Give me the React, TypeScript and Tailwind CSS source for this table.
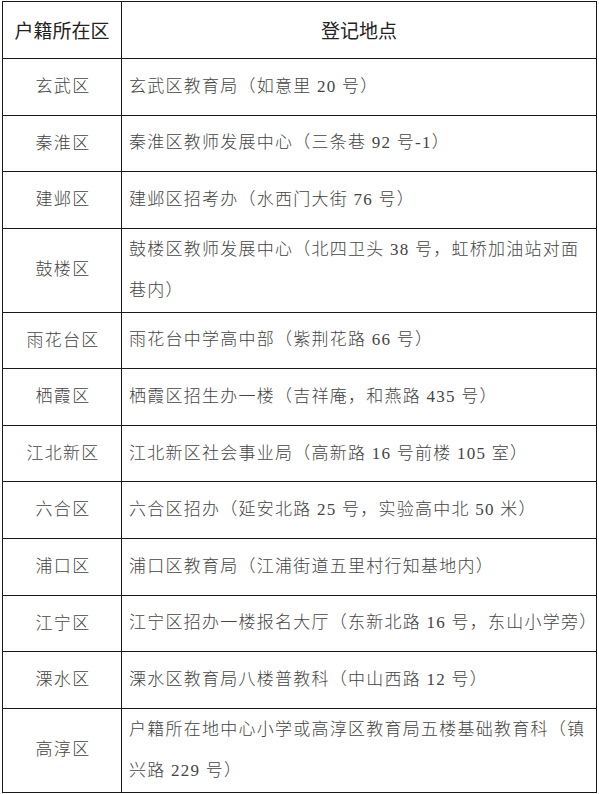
const rows: { area: string; place: string[]; tall?: boolean }[] = [
  { area: '玄武区', place: ['玄武区教育局（如意里 20 号）'] },
  { area: '秦淮区', place: ['秦淮区教师发展中心（三条巷 92 号-1）'] },
  { area: '建邺区', place: ['建邺区招考办（水西门大街 76 号）'] },
  { area: '鼓楼区', place: ['鼓楼区教师发展中心（北四卫头 38 号，虹桥加油站对面', '巷内）'], tall: true },
  { area: '雨花台区', place: ['雨花台中学高中部（紫荆花路 66 号）'] },
  { area: '栖霞区', place: ['栖霞区招生办一楼（吉祥庵，和燕路 435 号）'] },
  { area: '江北新区', place: ['江北新区社会事业局（高新路 16 号前楼 105 室）'] },
  { area: '六合区', place: ['六合区招办（延安北路 25 号，实验高中北 50 米）'] },
  { area: '浦口区', place: ['浦口区教育局（江浦街道五里村行知基地内）'] },
  { area: '江宁区', place: ['江宁区招办一楼报名大厅（东新北路 16 号，东山小学旁）'] },
  { area: '溧水区', place: ['溧水区教育局八楼普教科（中山西路 12 号）'] },
  { area: '高淳区', place: ['户籍所在地中心小学或高淳区教育局五楼基础教育科（镇', '兴路 229 号）'], tall: true },
];

const bodyFont = { fontFamily: '"Liberation Serif", "Noto Sans CJK SC", serif' };

export default function App() {
  return (
    <div className="w-[599px] h-[794px] bg-white pt-px pl-[2px] overflow-hidden">
      <table className="table-fixed border-collapse w-[595px]">
        <colgroup>
          <col className="w-[119px]" />
          <col />
        </colgroup>
        <thead>
          <tr className="h-[57px]">
            <th
              className="border border-[#1a1a1a] text-[19px] font-normal text-[#222] text-center"
              style={{ fontFamily: '"Noto Sans CJK SC", sans-serif' }}
            >
              户籍所在区
            </th>
            <th
              className="border border-[#1a1a1a] text-[19px] font-normal text-[#222] text-center"
              style={{ fontFamily: '"Noto Sans CJK SC", sans-serif' }}
            >
              登记地点
            </th>
          </tr>
        </thead>
        <tbody>
          {rows.map((r) => (
            <tr key={r.area} className={r.tall ? 'h-[83.8px]' : 'h-[56.6px]'}>
              <td
                className="border border-[#1a1a1a] text-center text-[17px] font-light text-[#444] tracking-[1.3px] pl-[2px]"
                style={bodyFont}
              >
                {r.area}
              </td>
              <td
                className={`border border-[#1a1a1a] pl-[7px] text-[17px] font-light text-[#444] tracking-[1.25px] whitespace-nowrap ${
                  r.tall ? 'leading-[41px]' : 'leading-[40px]'
                }`}
                style={bodyFont}
              >
                {r.place.map((line, i) => (
                  <div key={i}>{line}</div>
                ))}
              </td>
            </tr>
          ))}
        </tbody>
      </table>
    </div>
  );
}
